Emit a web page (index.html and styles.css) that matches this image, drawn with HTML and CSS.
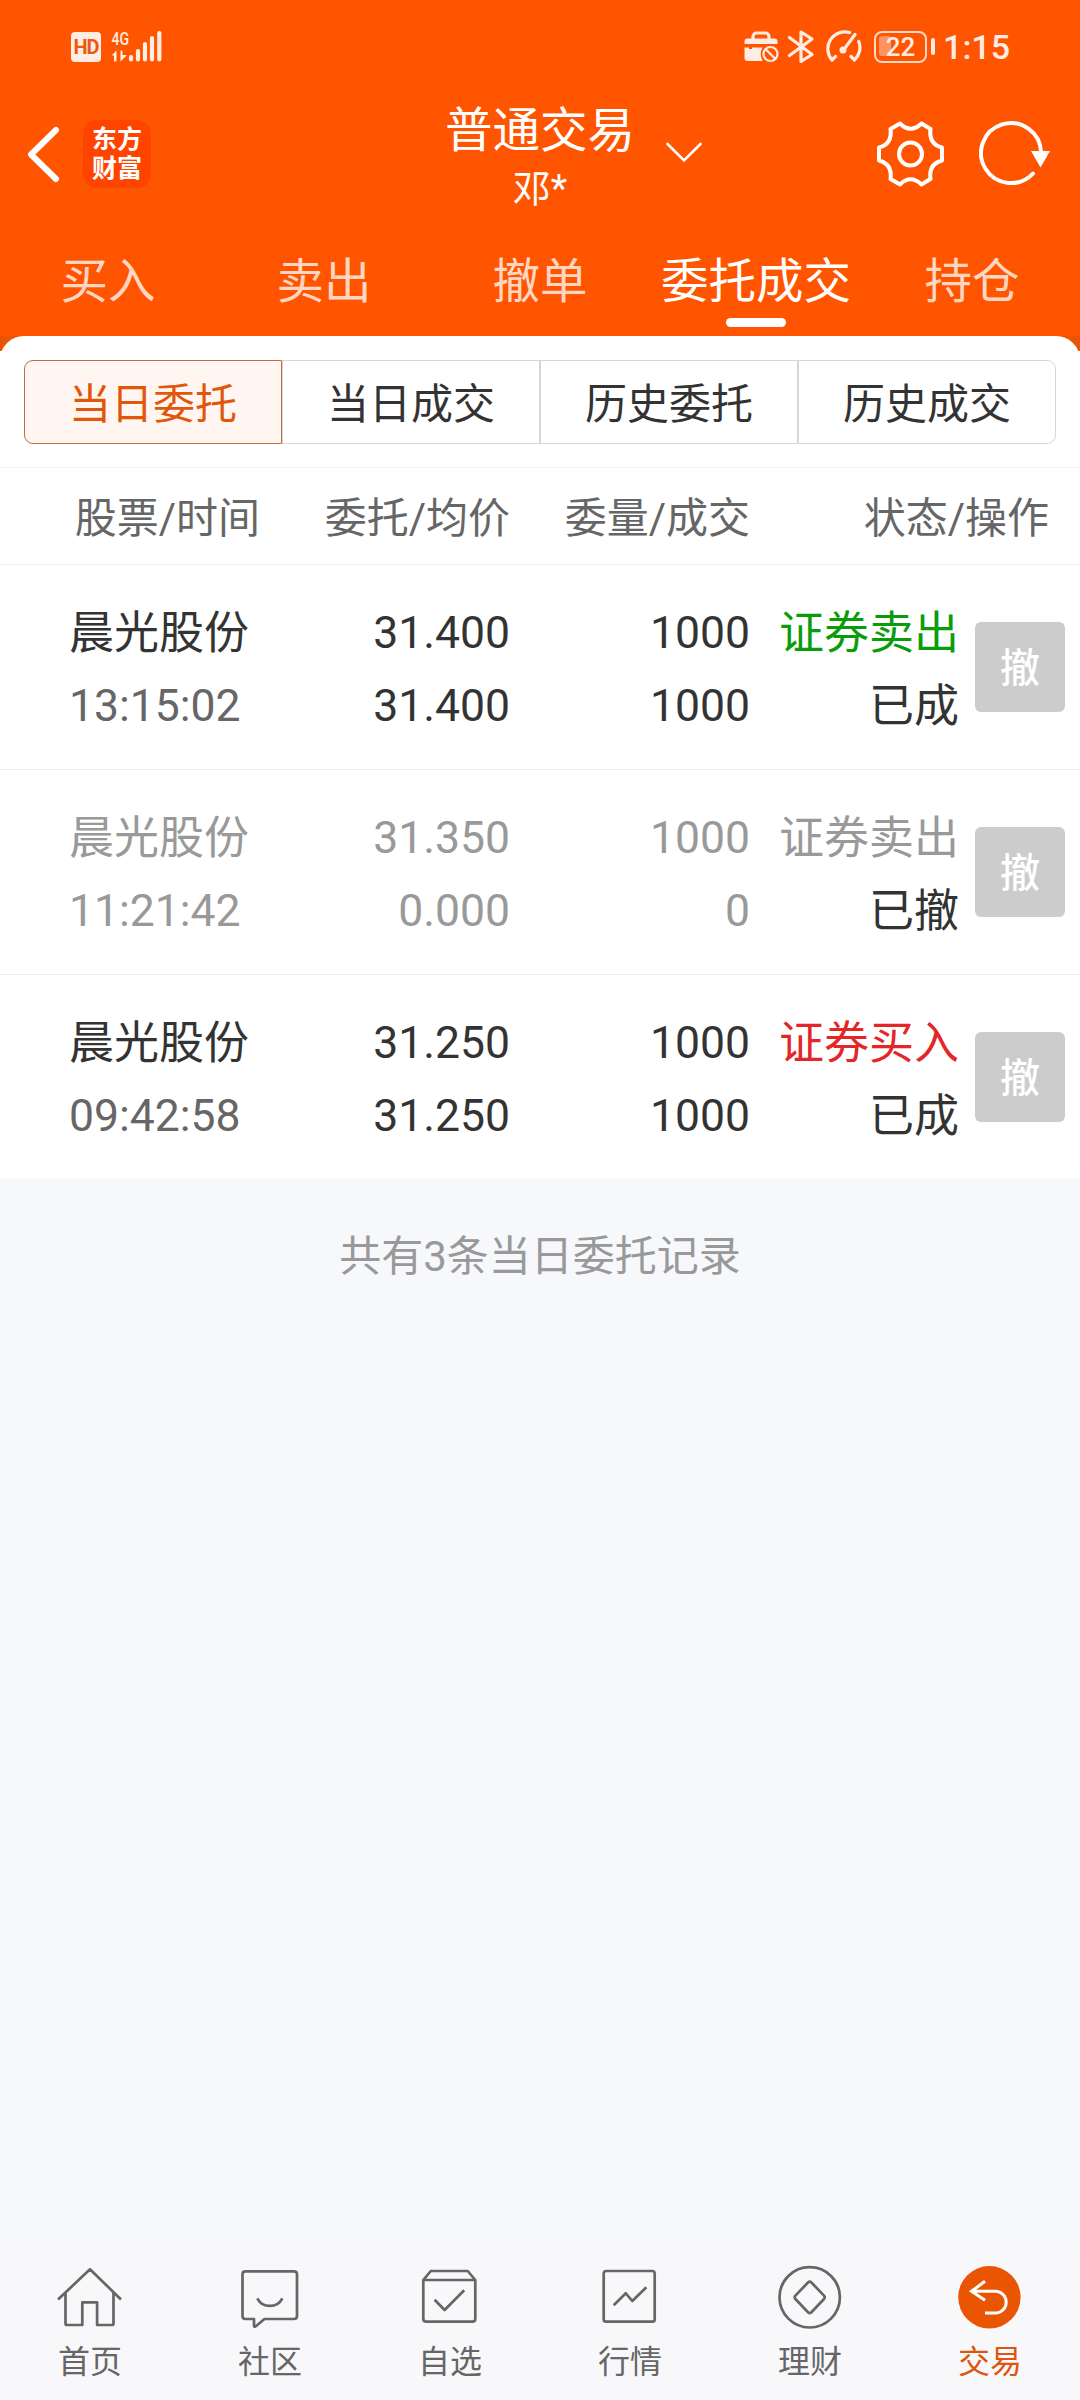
FILE: index.html
```html
<!DOCTYPE html>
<html lang="zh-CN">
<head>
    <meta charset="UTF-8">
    <meta name="viewport" content="width=device-width, initial-scale=1.0">
    <title>普通交易</title>
    <link rel="stylesheet" href="styles.css">
</head>
<body>

<header class="header">
    <div class="status-bar">
        <div class="status-left">
            <span class="hd">HD</span>
            <svg class="signal" width="52" height="36" viewBox="111 28 52 36">
                <text x="111.500" y="44.500" class="net" textLength="17.500" lengthAdjust="spacingAndGlyphs">4G</text>
                <path d="M111.500 55.500l5-5V61.500h-2.500v-6zM120.500 50.500h2v4.500h4.500l-6.500 6.500z" class="fill"/>
                <path d="M131 57v2.500M138 51v8.500M145 44v15.500M152 38v21.500M159.300 33v26.500" class="bars"/>
            </svg>
        </div>
        <div class="status-right">
            <svg class="case" width="36" height="34" viewBox="744 30 36 34">
                <path d="M753 40v-3.500a3.500 3.500 0 0 1 3.500-3.500h9a3.500 3.500 0 0 1 3.500 3.500V40" class="line"/>
                <path d="M747.500 38.500h27a3 3 0 0 1 3 3v2.500h-33v-2.500a3 3 0 0 1 3-3zM744.500 47.500h4.500v1.500h3v-1.500h10.500q-3.500 6 0 13.500h-15a3 3 0 0 1-3-3z" class="fill"/>
                <circle cx="770.500" cy="54" r="9.500" class="gap"/>
                <circle cx="770.500" cy="54" r="7" class="thin"/>
                <path d="M765.500 49l10 10" class="thin"/>
            </svg>
            <svg class="bt" width="28" height="34" viewBox="787 30 28 34">
                <path d="M789.500 37.500l22.500 17-11 7V32l11 7-22.500 16.500" class="line"/>
            </svg>
            <svg class="gauge" width="40" height="34" viewBox="823 30 40 34">
                <path d="M835.500 56.500l-3.500 3.500A17 17 0 0 1 849.500 32.500M858.800 41.500A17 17 0 0 1 854.500 60l-3.500-3.500M855 34.500L843.500 50" class="line"/>
                <circle cx="843" cy="50" r="3.500" class="fill"/>
            </svg>
            <div class="battery"><span class="level"></span><span class="percent">22</span></div>
            <span class="clock">1:15</span>
        </div>
    </div>

    <div class="title-bar">
        <div class="title-left">
            <svg width="36" height="60" viewBox="25 124 36 60">
                <path d="M56 130L31 154.500L56 179" class="back"/>
            </svg>
            <div class="logo">东方<br>财富</div>
        </div>
        <div class="title">
            <h1>普通交易</h1>
            <p>邓*</p>
            <svg class="caret" width="40" height="24" viewBox="664 140 40 24">
                <path d="M667.500 144L684 160.500L700.500 144"/>
            </svg>
        </div>
        <div class="title-right">
            <svg width="68" height="68" viewBox="877 120 68 68">
                <path d="M900 123.500Q910.500 134 921.500 123.500L930.500 129Q928.500 144 942 147.500V160.500Q928.500 164 930.500 179L921.500 184.500Q910.500 174 900 184.500L890.500 179Q892.500 164 879 160.500V147.500Q892.500 144 890.500 129Z" class="icon"/>
                <circle cx="910.500" cy="154" r="11.500" class="icon"/>
            </svg>
            <svg width="72" height="68" viewBox="979 120 72 68">
                <path d="M1033 173.500A30 30 0 1 1 1041 152" class="icon"/>
                <path d="M1031 151h19l-9.500 16.500z" class="tip"/>
            </svg>
        </div>
    </div>

    <nav class="tabs">
        <a>买入</a>
        <a>卖出</a>
        <a>撤单</a>
        <a class="active">委托成交</a>
        <a>持仓</a>
    </nav>
</header>

<main class="main">
    <div class="panel">
        <div class="segments">
            <a class="active">当日委托</a>
            <a>当日成交</a>
            <a>历史委托</a>
            <a>历史成交</a>
        </div>
    </div>

    <div class="list-head">
        <span>股票/时间</span>
        <span>委托/均价</span>
        <span>委量/成交</span>
        <span>状态/操作</span>
    </div>

    <div class="order">
        <div class="cell name"><span>晨光股份</span><span class="time">13:15:02</span></div>
        <div class="cell"><span>31.400</span><span>31.400</span></div>
        <div class="cell"><span>1000</span><span>1000</span></div>
        <div class="cell status"><span class="sell">证券卖出</span><span>已成</span></div>
        <button class="cancel">撤</button>
    </div>
    <div class="order revoked">
        <div class="cell name"><span>晨光股份</span><span class="time">11:21:42</span></div>
        <div class="cell"><span>31.350</span><span>0.000</span></div>
        <div class="cell"><span>1000</span><span>0</span></div>
        <div class="cell status"><span>证券卖出</span><span class="state">已撤</span></div>
        <button class="cancel">撤</button>
    </div>
    <div class="order">
        <div class="cell name"><span>晨光股份</span><span class="time">09:42:58</span></div>
        <div class="cell"><span>31.250</span><span>31.250</span></div>
        <div class="cell"><span>1000</span><span>1000</span></div>
        <div class="cell status"><span class="buy">证券买入</span><span>已成</span></div>
        <button class="cancel">撤</button>
    </div>

    <p class="total">共有3条当日委托记录</p>
</main>

<footer class="bottom-nav">
    <a>
        <svg width="72" height="68" viewBox="0 0 72 68"><path d="M4 37.500L36 7.300L67 37.500M11.500 31V61.500q0 1.500 1.500 1.500H28.300V40.300H43.100V63H58q1.500 0 1.500-1.500V31"/></svg>
        <span>首页</span>
    </a>
    <a>
        <svg width="72" height="68" viewBox="0 0 72 68"><path d="M11.500 9.300H60q3 0 3 3V54q0 3-3 3H30.500L21.500 64.500q-1.500 1-1.500-1V57H11.500q-3 0-3-3V12.300q0-3 3-3zM23.300 36.300C28.500 46.500 43 46.500 48.400 36.300"/></svg>
        <span>社区</span>
    </a>
    <a>
        <svg width="72" height="68" viewBox="0 0 72 68"><path d="M9.300 18L16.800 9H53.700L61.300 18V56.700q0 3-3 3H12.300q-3 0-3-3zH61.300M20.600 37.700L30.600 48L50.200 28.300"/></svg>
        <span>自选</span>
    </a>
    <a>
        <svg width="72" height="68" viewBox="0 0 72 68"><rect x="9.700" y="9" width="51" height="50.700" rx="2.500"/><path d="M19.700 43.300L31.800 31.300L38.300 39L52.400 25.300"/></svg>
        <span>行情</span>
    </a>
    <a>
        <svg width="72" height="68" viewBox="0 0 72 68"><circle cx="35.700" cy="35.300" r="30.200"/><path d="M34 20.500q1.700-1.700 3.400 0L50 33.600q1.500 1.700 0 3.400L37.400 50.300q-1.700 1.700-3.400 0L21.400 37q-1.500-1.700 0-3.400z"/></svg>
        <span>理财</span>
    </a>
    <a class="active">
        <svg width="72" height="68" viewBox="0 0 72 68"><circle cx="35.400" cy="35.300" r="31.200"/><path d="M31 19.300L17.500 29.300L31 38.300M17.500 29.300H42.300A10.900 10.900 0 0 1 42.300 51H31"/></svg>
        <span>交易</span>
    </a>
</footer>

</body>
</html>
```
FILE: styles.css
```css
* {
    box-sizing: border-box;
}

body {
    font-family: Roboto, "Noto Sans CJK SC", sans-serif;
    background-color: #f7f8fb;
    color: #333;
    margin: 0;
    min-height: 2400px;
    display: flex;
    flex-direction: column;
}

svg {
    display: block;
    fill: none;
}

h1, p {
    margin: 0;
    font-weight: 400;
}

/* Header */
.header {
    height: 336px;
    background-color: #ff5500;
    color: #fff;
}

.status-bar {
    height: 94px;
    padding: 0 70px 0 71px;
    display: flex;
    justify-content: space-between;
    align-items: center;
    color: #ffece2;
}

.status-left, .status-right {
    display: flex;
    align-items: center;
}

.hd {
    width: 30px;
    height: 30px;
    border-radius: 4px;
    background-color: #ffece2;
    color: #e85a10;
    font-size: 20px;
    font-weight: 700;
    line-height: 30px;
    text-align: center;
    letter-spacing: -1px;
}

.signal {
    margin: -2px 0 0 10px;
}

.net {
    font-size: 19px;
    font-weight: 500;
    fill: #ffece2;
}

.bars {
    stroke: #ffece2;
    stroke-width: 4.2;
    stroke-linecap: round;
}

.line {
    stroke: #ffece2;
    stroke-width: 3.2;
    stroke-linecap: round;
    stroke-linejoin: round;
}

.thin {
    stroke: #ffece2;
    stroke-width: 2.2;
}

.fill {
    fill: #ffece2;
}

.gap {
    fill: #ff5500;
}

.bt {
    margin-left: 7px;
}

.gauge {
    margin-left: 8px;
}

.battery {
    position: relative;
    width: 53px;
    height: 32px;
    margin: 0 16px 0 11px;
    border: 2.5px solid #ffd9c6;
    border-radius: 8px;
    text-align: center;
}

.battery::after {
    content: "";
    position: absolute;
    right: -10px;
    top: 5px;
    width: 4px;
    height: 17px;
    border-radius: 2px;
    background-color: #ffece2;
}

.level {
    position: absolute;
    left: 3px;
    top: 3px;
    width: 12px;
    height: 20px;
    border-radius: 3px;
    background-color: #ff9460;
}

.percent {
    position: relative;
    font-size: 26px;
    font-weight: 500;
    line-height: 28px;
    display: block;
}

.clock {
    font-size: 34px;
    font-weight: 500;
    line-height: 40px;
}

.title-bar {
    height: 126px;
    display: grid;
    grid-template-columns: 300px 1fr 300px;
}

.title-left {
    display: flex;
    align-items: center;
    padding: 0 0 6px 25px;
}

.back {
    stroke: #fff;
    stroke-width: 6;
    stroke-linecap: round;
    stroke-linejoin: round;
}

.logo {
    width: 68px;
    height: 68px;
    margin-left: 22px;
    padding-top: 5px;
    border-radius: 14px;
    background-color: #ff4400;
    font-size: 25px;
    font-weight: 700;
    line-height: 29px;
    text-align: center;
}

.title {
    position: relative;
    text-align: center;
}

.title h1 {
    font-size: 47.5px;
    line-height: 56px;
    margin-top: 9px;
}

.title p {
    font-size: 38px;
    line-height: 44px;
    margin-top: 8px;
}

/* sits next to the centred title */
.caret {
    position: absolute;
    left: 364px;
    top: 46px;
    stroke: #fff;
    stroke-width: 2.6;
    stroke-linecap: round;
}

.title-right {
    display: flex;
    justify-content: flex-end;
    align-items: center;
    gap: 34px;
    padding: 0 29px 6px 0;
}

.icon {
    stroke: #fff;
    stroke-width: 4;
    stroke-linecap: round;
    stroke-linejoin: round;
}

.tip {
    fill: #fff;
}

.tabs {
    display: grid;
    grid-template-columns: repeat(5, 1fr);
    height: 116px;
}

.tabs a {
    display: flex;
    flex-direction: column;
    align-items: center;
    padding-top: 32px;
    font-size: 47.5px;
    line-height: 60px;
    color: #ffd6c1;
}

.tabs a.active {
    color: #fff;
}

.tabs a.active::after {
    content: "";
    width: 60px;
    height: 9px;
    margin-top: 6px;
    border-radius: 4.5px;
    background-color: #fff;
}

/* Orders */
.main {
    flex: 1;
}

.panel {
    height: 131px;
    background: linear-gradient(#ea5504 15px, #fff 15px);
}

.segments {
    display: grid;
    grid-template-columns: repeat(4, 1fr);
    height: 131px;
    padding: 24px 24px 23px;
    border-radius: 24px 24px 0 0;
    background-color: #fff;
}

.segments a {
    padding-top: 5px;
    border: 1px solid #d5d7d7;
    font-size: 42px;
    line-height: 77px;
    text-align: center;
}

.segments a:first-child {
    border-radius: 9px 0 0 9px;
}

.segments a:last-child {
    border-radius: 0 9px 9px 0;
}

.segments a.active {
    border-color: #c56a3a;
    background-color: #fff6f2;
    color: #e2560c;
}

.list-head {
    display: grid;
    grid-template-columns: 260px 250px 240px 299px;
    height: 98px;
    padding-right: 31px;
    border-top: 1px solid #f5f5f5;
    border-bottom: 1px solid #eee;
    background-color: #fff;
    color: #666;
    font-size: 42px;
    line-height: 101px;
    text-align: right;
}

.order {
    display: grid;
    grid-template-columns: 201px 240px 240px 209px 106px;
    height: 205px;
    padding: 31px 15px 0 69px;
    border-bottom: 1px solid #eaeaea;
    background-color: #fff;
    font-size: 44.5px;
}

.order:nth-last-child(2) {
    height: 204px;
    border-bottom: 0;
}

.cell {
    text-align: right;
}

.cell span {
    display: block;
    height: 73px;
    line-height: 75px;
    white-space: nowrap;
}

.name {
    text-align: left;
}

.name span:first-child, .status span {
    font-size: 45px;
    line-height: 76px;
}

.time {
    color: #666;
}

.sell {
    color: #0a9c0a;
}

.buy {
    color: #e32626;
}

.revoked, .revoked .time {
    color: #999;
}

.revoked .state {
    color: #333;
}

.cancel {
    width: 90px;
    height: 90px;
    margin: 26px 0 0 16px;
    padding: 4px 0 0;
    border: 0;
    border-radius: 6px;
    background-color: #ccc;
    color: #fff;
    font-family: inherit;
    font-size: 40px;
    font-weight: 500;
    line-height: 86px;
}

.total {
    margin-top: 48px;
    color: #999;
    font-size: 42px;
    line-height: 60px;
    text-align: center;
}

/* Bottom navigation */
.bottom-nav {
    display: grid;
    grid-template-columns: repeat(6, 1fr);
    height: 158px;
    padding-top: 20px;
    background-color: #f8f8fb;
    color: #666;
}

.bottom-nav a {
    display: flex;
    flex-direction: column;
    align-items: center;
    font-size: 32px;
    line-height: 40px;
}

.bottom-nav svg {
    stroke: #666;
    stroke-width: 2.7;
    stroke-linejoin: round;
}

.bottom-nav span {
    margin-top: 12px;
}

.bottom-nav .active {
    color: #dd5510;
}

.bottom-nav .active svg {
    stroke: #fff;
    stroke-width: 3;
    stroke-linejoin: miter;
}

.bottom-nav .active circle {
    fill: #ea5504;
    stroke: none;
}
```
